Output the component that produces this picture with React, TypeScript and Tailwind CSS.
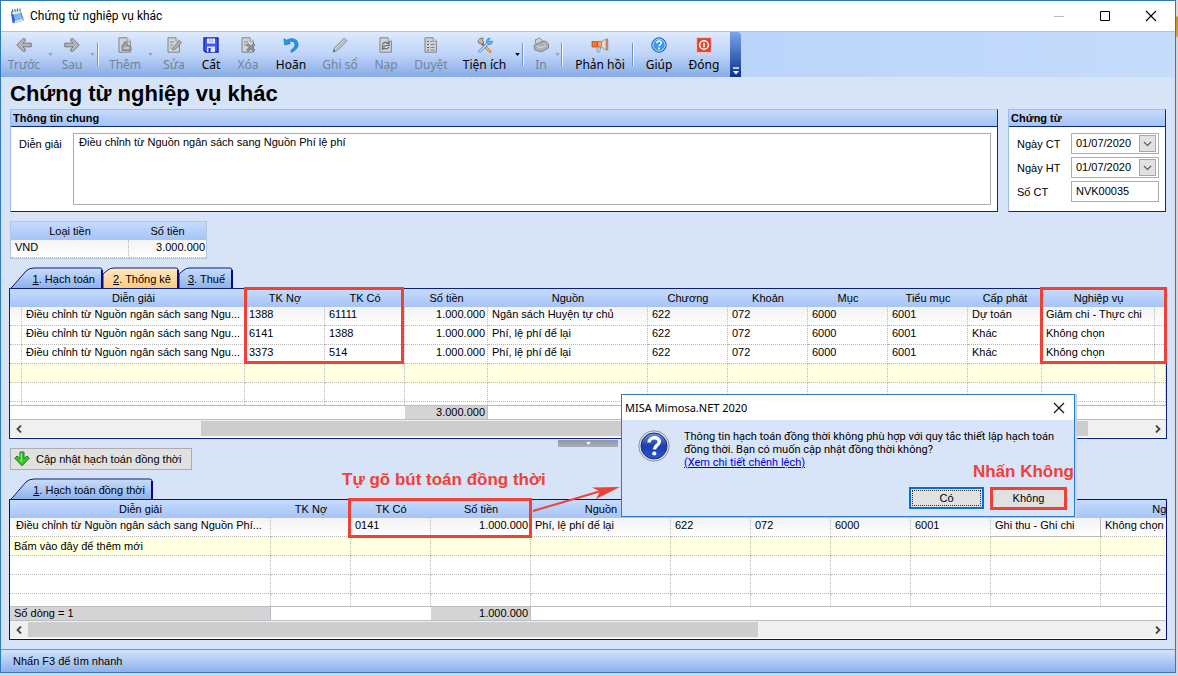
import React from "react";

type Tool = {
  label: string;
  box: string;
  icon: React.ReactNode;
  off?: boolean;
  menu?: string;
  sepAfter?: string;
};

const G = "#7f848b";

const BackIcon = ({ flip = false }: { flip?: boolean }) => (
  <svg viewBox="0 0 16 16" className={flip ? "size-4 -scale-x-100" : "size-4"}>
    <path d="M7.800 1 .8 8l7 7 2-2-2.900-3.200h8.300V6.200H6.900L9.800 3z" fill="#b4b6b8" stroke="#75797f" strokeWidth="1" strokeLinejoin="round" />
  </svg>
);
const Page = ({ children }: { children?: React.ReactNode }) => (
  <svg viewBox="0 0 16 16" className="size-4">
    <path d="M2 .8h8l3.400 3.400v11H2z" fill="#d0d4da" stroke={G} strokeWidth="1" />
    <path d="M10 .8v3.400h3.400" fill="#eceef1" stroke={G} strokeWidth=".8" />
    {children}
  </svg>
);
const AddIcon = () => (
  <Page>
    <path d="M5 13V8h2V5h3v3l4 1.500v4H5z" fill="#a0a3a8" stroke="#70757b" strokeWidth=".8" />
    <path d="M7 11h5" stroke="#dfe2e6" />
  </Page>
);
const EditIcon = () => (
  <Page>
    <path d="M4 5h4M4 8h3M4 11h2" stroke="#858a91" />
    <path d="m6.500 13 1-3L13.600 3.500l2 2-6 6.600z" fill="#aeb1b5" stroke="#70757b" strokeWidth=".8" />
  </Page>
);
const SaveIcon = () => (
  <svg viewBox="0 0 16 16" className="size-4">
    <path d="M1 1h14v14H2.500L1 13.500z" fill="#3d5bf0" stroke="#1a22c4" strokeWidth="1.400" />
    <path d="M4 1.500h8v5H4z" fill="#eef3ff" />
    <path d="M5.500 3h5M5.500 4.800h5" stroke="#7a93f2" strokeWidth=".8" />
    <path d="M4 9.500h8V15H4z" fill="#dbe5ff" />
    <path d="M5.500 11h2v4h-2z" fill="#1a22c4" />
  </svg>
);
const DeleteIcon = () => (
  <Page>
    <path d="M4 5h4M4 8h3" stroke="#858a91" />
    <path d="m7 7 7.500 7M14.500 7 7 14" stroke="#6a6f76" strokeWidth="2.400" />
    <path d="m7 7 7.500 7M14.500 7 7 14" stroke="#b9bcc0" strokeWidth=".9" />
  </Page>
);
const UndoIcon = () => (
  <svg viewBox="0 0 16 16" className="size-4">
    <path d="M1 1.800 1.600 8l6-1.500-2-1.700c3.600-1.300 6.400 0 6.300 3 0 2-1.200 3.700-3.800 5.400v2.200c4.500-1.900 7-4.700 7-8C15 2.500 9.500-.3 3.600 3.200z" fill="#2396e8" stroke="#1670bd" strokeWidth=".7" strokeLinejoin="round" />
  </svg>
);
const PencilIcon = () => (
  <svg viewBox="0 0 16 16" className="size-4">
    <path d="m1.200 15 1.300-4.200L12.300 1.200l2.700 2.600L5.300 13.500z" fill="#cfd1d5" stroke="#82878e" strokeWidth="1" strokeLinejoin="round" />
    <path d="m4 12.200 9.500-9.600" stroke="#9a9ea4" strokeWidth=".8" />
    <path d="m1.200 15 .8-2.500 1.700 1.700z" fill="#5c6168" />
  </svg>
);
const ReloadIcon = () => (
  <Page>
    <path d="M4.500 7.500c.6-2 3.500-2.700 5-1.200L11 5v3.500H7.600M11 9.800c-.6 2-3.500 2.700-5 1.200l-1.500 1.300V9h3.400" fill="none" stroke="#62676e" strokeWidth="1.200" />
  </Page>
);
const ListIcon = () => (
  <Page>
    <path d="M4 4.500h2M4 7.500h2M4 10.500h2M4 13h2" stroke="#5a5f66" strokeWidth="1.200" />
    <path d="M7.500 4.500h2M7.500 7.500h4M7.500 10.500h4M7.500 13h4" stroke="#7d8289" />
  </Page>
);
const ToolsIcon = () => (
  <svg viewBox="0 0 16 16" className="size-4">
    <path d="m4.500 6 8.700 8.700" stroke="#c46a1c" strokeWidth="2.600" strokeLinecap="round" />
    <path d="m8.500 10 4.700 4.700" stroke="#ffb968" strokeWidth="1.400" strokeLinecap="round" />
    <path d="M1 4.500C1.500 2 3.500.7 6.500 1.200L5 3l2 2-2.500 2.500L3 5.700 2 6.500z" fill="#b9bcc0" stroke="#73624f" strokeWidth=".8" />
    <path d="m2.800 14.200 8-8" stroke="#3b8fdd" strokeWidth="2.800" strokeLinecap="round" />
    <path d="m2.800 14.200 8-8" stroke="#c2e2fb" strokeWidth="1.300" strokeLinecap="round" />
    <path d="M9.500 4.500C9.600 2.300 11 1 13.200 1.200l-1.500 2 .9 1.500 2.700-.6c.3 2.200-1.200 3.600-3.600 3.500z" fill="#6cb6f3" stroke="#2e7bc7" strokeWidth=".8" />
  </svg>
);
const PrintIcon = () => (
  <svg viewBox="0 0 16 16" className="size-4">
    <path d="M2 3 6.500 1l3 2.500-1 4-5 1z" fill="#d0d3d7" stroke="#7f848b" strokeWidth=".9" />
    <path d="M1 8.500 5 6.500l4-2 3.500-.5L15.500 7v4L8.500 14.800 1.800 13z" fill="#aeb1b5" stroke="#787d84" strokeWidth=".9" strokeLinejoin="round" />
    <path d="m4 9.500 4.500 1.300L13 8" fill="none" stroke="#dcdfe3" />
  </svg>
);
const HornIcon = () => (
  <svg viewBox="0 0 18 16" className="h-4 w-[18px]">
    <path d="M1 4.500h5.500v5.500H1z" fill="#f0743a" stroke="#b9541a" strokeWidth=".8" />
    <path d="M6.500 4.500h4v5.500h-4z" fill="#ffa25c" stroke="#b9541a" strokeWidth=".8" />
    <path d="m10.500 4.500 4.800-2.500v11l-4.800-3z" fill="#d9dde3" stroke="#8b8f96" strokeWidth=".8" />
    <path d="M15.300 2h1.500v11h-1.500z" fill="#f2935a" stroke="#a3673f" strokeWidth=".6" />
    <path d="M5.500 10.200h4v2.300L8 15.300H6.500z" fill="#c4c8ce" stroke="#8b8f96" strokeWidth=".7" />
  </svg>
);
const HelpIcon = () => (
  <svg viewBox="0 0 16 16" className="size-4">
    <circle cx="8" cy="8" r="7.200" fill="#3b97ea" stroke="#1d5fb4" strokeWidth="1" />
    <circle cx="8" cy="8" r="6" fill="none" stroke="#bfe0fb" strokeWidth=".9" />
    <path d="M5.800 6.200c.1-3 4.700-2.800 4.500-.2-.1 1.500-2.200 1.600-2.200 3.300" fill="none" stroke="#fff" strokeWidth="1.500" />
    <path d="M7.200 10.600h1.700v1.600H7.200z" fill="#fff" />
  </svg>
);
const PowerIcon = () => (
  <svg viewBox="0 0 16 16" className="size-4">
    <rect x=".6" y=".6" width="14.800" height="14.800" rx="1" fill="#e2452c" stroke="#f7c9c0" strokeWidth="1" />
    <circle cx="8" cy="8" r="4.300" fill="none" stroke="#fff" strokeWidth="1.500" />
    <path d="M8 5.700v4.600" stroke="#fff" strokeWidth="1.500" />
  </svg>
);

const sep = "h-[23px] w-[2px] shrink-0 border-l border-[#6f93cc] bg-white/80";

const tools: Tool[] = [
  { label: "Trước", box: "w-[42px]", icon: <BackIcon />, off: true, menu: "w-[11px]" },
  { label: "Sau", box: "w-8", icon: <BackIcon flip />, off: true, menu: "w-[9px]", sepAfter: "mr-[5px]" },
  { label: "Thêm", box: "w-[42px]", icon: <AddIcon />, off: true, menu: "w-2" },
  { label: "Sửa", box: "w-10", icon: <EditIcon />, off: true },
  { label: "Cất", box: "w-[34px]", icon: <SaveIcon /> },
  { label: "Xóa", box: "w-10", icon: <DeleteIcon />, off: true },
  { label: "Hoãn", box: "w-[46px]", icon: <UndoIcon /> },
  { label: "Ghi sổ", box: "w-[52px]", icon: <PencilIcon />, off: true },
  { label: "Nạp", box: "w-10", icon: <ReloadIcon />, off: true },
  { label: "Duyệt", box: "w-[50px]", icon: <ListIcon />, off: true },
  { label: "Tiện ích", box: "w-[57px]", icon: <ToolsIcon />, menu: "w-[9px]", sepAfter: "mr-[5px]" },
  { label: "In", box: "w-6", icon: <PrintIcon />, off: true, menu: "w-2", sepAfter: "mr-[7px]" },
  { label: "Phản hồi", box: "w-[60px]", icon: <HornIcon />, sepAfter: "ml-[2px] mr-[6px]" },
  { label: "Giúp", box: "w-[38px]", icon: <HelpIcon /> },
  { label: "Đóng", box: "w-[52px]", icon: <PowerIcon /> },
];

function Toolbar() {
  return (
    <div role="toolbar" className="flex h-[46px] border-t border-[#a9c4ee] bg-linear-to-r from-[#a9c6f6] to-[#c5dcfb]">
      <div className="flex items-center bg-linear-to-b from-[#deeafc] via-[#bed4f8] to-[#87abe6] pl-[2px] font-['Noto_Sans',sans-serif]">
        {tools.map((t) => (
          <React.Fragment key={t.label}>
            <button type="button" disabled={t.off} className={`${t.box} flex shrink-0 flex-col items-center gap-1 whitespace-nowrap text-xs leading-4 ${t.off ? "text-[#75829a]" : "text-black"}`}>
              {t.icon}
              {t.label}
            </button>
            {t.menu && (
              <span className={`${t.menu} flex shrink-0 justify-center`}>
                <svg viewBox="0 0 6 4" className="h-[3px] w-[5px]">
                  <path d="M0 0h6L3 4z" fill={t.off ? "#8da4c9" : "#000"} />
                </svg>
              </span>
            )}
            {t.sepAfter && <span className={`${sep} ${t.sepAfter}`} />}
          </React.Fragment>
        ))}
      </div>
      <button type="button" aria-label="Tùy chọn" className="flex w-[11px] shrink-0 items-end justify-center rounded-tr-sm bg-linear-to-b from-[#7ba4ea] to-[#0f318e] pb-[2px]">
        <svg viewBox="0 0 8 8" className="size-2">
          <path d="M1 1h6" stroke="#fff" strokeWidth="1.400" />
          <path d="M1 4h6L4 7.500z" fill="#fff" />
        </svg>
      </button>
    </div>
  );
}

function Panel({ title, className, children }: { title: string; className: string; children: React.ReactNode }) {
  return (
    <section className={`${className} flex h-[103px] flex-col border-r border-b border-l border-t border-[#0b2a7a] border-t-[#9dbcec] border-l-[#9dbcec] bg-white`}>
      <h2 className="h-[17px] shrink-0 border-b border-[#0b2a7a] bg-linear-to-b from-[#c6dbfb] to-[#a5c2f5] pl-[2px] text-[11px] leading-4 font-bold">{title}</h2>
      {children}
    </section>
  );
}

function Chevron() {
  return (
    <svg viewBox="0 0 9 6" className="h-[6px] w-[9px]">
      <path d="m.8.800 3.700 3.700L8.200.8" fill="none" stroke="#555" strokeWidth="1.200" />
    </svg>
  );
}

function Field({ id, label, value, drop }: { id: string; label: string; value: string; drop?: boolean }) {
  return (
    <div className="flex items-center">
      <label htmlFor={id} className="w-[54px] shrink-0 pt-px">{label}</label>
      <div className="flex h-[21px] min-w-0 flex-1 items-center border border-[#abadb3] bg-white pr-[2px]">
        <input id={id} defaultValue={value} className="min-w-0 flex-1 bg-transparent pl-1 outline-none" />
        {drop && (
          <button type="button" aria-label={label} className="flex h-[17px] w-[17px] items-center justify-center border border-[#a9a9a9] bg-[#e1e1e1]">
            <Chevron />
          </button>
        )}
      </div>
    </div>
  );
}

function Tab({ n, label, box, first, on }: { n: string; label: string; box: string; first?: boolean; on?: boolean }) {
  const w = box === "w-[92px]" ? 92 : box === "w-[142px]" ? 142 : box === "w-[76px]" ? 76 : 54;
  const r = w - 1;
  const d = first ? `M0 21 2 19 15 4Q18 1 23 1H${r - 2}Q${r} 1 ${r} 3V21` : `M0 21V7L5 3Q7 1 11 1H${r - 2}Q${r} 1 ${r} 3V21`;
  const fill = on ? "url(#tab-warm)" : "url(#tab-cool)";
  return (
    <button type="button" role="tab" className={`${box} relative flex h-[21px] shrink-0 items-center justify-end pr-2 text-[11px] leading-none whitespace-nowrap`}>
      <svg viewBox={`0 0 ${w} 21`} className="absolute inset-0 size-full">
        <defs>
          <linearGradient id="tab-cool" x2="0" y2="1">
            <stop offset="0" stopColor="#c9ddfb" />
            <stop offset="1" stopColor="#8fb2ea" />
          </linearGradient>
          <linearGradient id="tab-warm" x2="0" y2="1">
            <stop offset="0" stopColor="#ffe9c6" />
            <stop offset="1" stopColor="#fccb80" />
          </linearGradient>
        </defs>
        <path d={d} fill={fill} stroke="#0a1c73" strokeWidth="1" />
        <path d={`M${r} 3V21`} stroke="#0a0a86" strokeWidth="2" />
      </svg>
      <span className="relative pt-[3px]">
        <u>{n}</u>. {label}
      </span>
    </button>
  );
}

function ScrollBar({ before, thumb }: { before: string; thumb: string }) {
  return (
    <div className="flex h-[17px] items-stretch bg-[#f0f0f0] py-px">
      <button type="button" aria-label="Cuộn trái" className="flex w-[17px] items-center justify-center">
        <svg viewBox="0 0 8 8" className="size-2"><path d="M6 .5 2.500 4 6 7.500" fill="none" stroke="#444" strokeWidth="1.800" /></svg>
      </button>
      <span className={`${before} shrink-0`} />
      <span className={`${thumb} shrink-0 bg-[#cdcdcd]`} />
      <span className="flex-1" />
      <button type="button" aria-label="Cuộn phải" className="flex w-[17px] items-center justify-center">
        <svg viewBox="0 0 8 8" className="size-2"><path d="M2 .5 5.500 4 2 7.500" fill="none" stroke="#444" strokeWidth="1.800" /></svg>
      </button>
    </div>
  );
}

const headRow = "h-[18px] bg-linear-to-b from-[#c6dbfc] to-[#a6c4f8]";
const cell = "h-[19px] whitespace-nowrap border-r border-b border-dotted border-[#b9b9b9] pl-1 align-top leading-[15px]";
const num = "h-[19px] whitespace-nowrap border-r border-b border-dotted border-[#b9b9b9] pr-[2px] text-right align-top leading-[15px]";
const foot = "h-[15px] border-y border-[#b9bdc6] leading-[13px]";
const mark = "pointer-events-none absolute border-3 border-[#ef4136]";

const cols1 = ["w-3", "w-[223px]", "w-20", "w-20", "w-[83px]", "w-40", "w-20", "w-20", "w-20", "w-20", "w-[74px]", "w-[113px]", ""];
const heads1 = ["", "Diễn giải", "TK Nợ", "TK Có", "Số tiền", "Nguồn", "Chương", "Khoản", "Mục", "Tiểu mục", "Cấp phát", "Nghiệp vụ", ""];
const desc = "Điều chỉnh từ Nguồn ngân sách sang Nguồn Phí lệ phí";
const descShort = "Điều chỉnh từ Nguồn ngân sách sang Ngu...";
const rows1 = [
  ["", descShort, "1388", "61111", "1.000.000", "Ngân sách Huyện tự chủ", "622", "072", "6000", "6001", "Dự toán", "Giảm chi - Thực chi", ""],
  ["", descShort, "6141", "1388", "1.000.000", "Phí, lệ phí để lại", "622", "072", "6000", "6001", "Khác", "Không chọn", ""],
  ["", descShort, "3373", "514", "1.000.000", "Phí, lệ phí để lại", "622", "072", "6000", "6001", "Khác", "Không chọn", ""],
];

const cols2 = ["w-[261px]", "w-20", "w-20", "w-[100px]", "w-[140px]", "w-20", "w-20", "w-20", "w-20", "w-[110px]", "w-[152px]"];
const heads2 = ["Diễn giải", "TK Nợ", "TK Có", "Số tiền", "Nguồn", "", "", "", "", "", "Nghiệp vụ"];
const row2 = ["Điều chỉnh từ Nguồn ngân sách sang Nguồn Phí...", "", "0141", "1.000.000", "Phí, lệ phí để lại", "622", "072", "6000", "6001", "Ghi thu - Ghi chi", "Không chọn"];

function EntryGrid() {
  return (
    <div className="relative border border-[#0b1f7c] bg-white pb-px">
      <table className="w-full table-fixed border-separate border-spacing-0">
        <colgroup>{cols1.map((c, i) => <col key={i} className={c} />)}</colgroup>
        <thead>
          <tr className={headRow}>{heads1.map((h, i) => <th key={i} className="font-normal leading-[18px]">{h}</th>)}</tr>
        </thead>
        <tbody>
          {rows1.map((r, i) => (
            <tr key={i} className={i === 0 ? "bg-linear-to-b from-[#f3f3f3] to-white" : ""}>
              {r.map((v, j) => <td key={j} className={j === 4 ? num : cell}>{v}</td>)}
            </tr>
          ))}
          <tr className="bg-[#ffffe1]">{cols1.map((_, j) => <td key={j} className={cell} />)}</tr>
          <tr>{cols1.map((_, j) => <td key={j} className={cell} />)}</tr>
          <tr>{cols1.map((_, j) => <td key={j} className="h-[3px] border-r border-dotted border-[#b9b9b9]" />)}</tr>
        </tbody>
        <tfoot>
          <tr>
            <td colSpan={4} className={foot} />
            <td className={`${foot} border-r bg-[#d4d4d4] pr-[2px] text-right`}>3.000.000</td>
            <td colSpan={8} className={foot} />
          </tr>
        </tfoot>
      </table>
      <ScrollBar before="w-[174px]" thumb="w-[887px]" />
      <div className={`${mark} top-[-2px] left-[234px] h-[77px] w-[160px]`} />
      <div className={`${mark} top-[-2px] left-[1030px] h-[77px] w-[127px]`} />
    </div>
  );
}

function ParallelGrid() {
  return (
    <div className="relative border border-[#0b0b7c] bg-white pb-px">
      <div className="overflow-hidden">
        <table className="w-[1243px] table-fixed border-separate border-spacing-0">
          <colgroup>{cols2.map((c, i) => <col key={i} className={c} />)}</colgroup>
          <thead>
            <tr className={headRow}>{heads2.map((h, i) => <th key={i} className="font-normal leading-[18px]">{h}</th>)}</tr>
          </thead>
          <tbody>
            <tr className="bg-linear-to-b from-[#f3f3f3] to-white">
              {row2.map((v, j) => <td key={j} className={j === 3 ? num : j === 9 ? `${cell} border-solid` : j === 0 ? `${cell} pl-[6px]` : cell}>{v}</td>)}
            </tr>
            <tr className="bg-[#ffffe1]">
              {cols2.map((_, j) => <td key={j} className={`${cell} leading-[18px]`}>{j === 0 ? "Bấm vào đây để thêm mới" : ""}</td>)}
            </tr>
            <tr>{cols2.map((_, j) => <td key={j} className={cell} />)}</tr>
            <tr>{cols2.map((_, j) => <td key={j} className={cell} />)}</tr>
            <tr>{cols2.map((_, j) => <td key={j} className="h-3 border-r border-dotted border-[#b9b9b9]" />)}</tr>
          </tbody>
          <tfoot>
            <tr>
              <td className={`${foot} border-r bg-[#d4d4d4] pl-1`}>Số dòng = 1</td>
              <td colSpan={2} className={foot} />
              <td className={`${foot} border-r bg-[#d4d4d4] pr-[2px] text-right`}>1.000.000</td>
              <td colSpan={7} className={foot} />
            </tr>
          </tfoot>
        </table>
      </div>
      <ScrollBar before="w-px" thumb="w-[730px]" />
      <div className={`${mark} top-[-2px] left-[338px] h-10 w-[184px]`} />
    </div>
  );
}

function Dialog() {
  return (
    <div role="dialog" aria-label="MISA Mimosa.NET 2020" className="absolute top-[393px] left-[620px] w-[454px] border border-[#2b7cc0] bg-[#d8e4f8] shadow-[2px_0_1px_#c9d3ee]">
      <div className="flex h-[25px] items-center justify-between bg-white pr-[9px] pl-[3px] font-['Noto_Sans',sans-serif] text-[11px]">
        <span>MISA Mimosa.NET 2020</span>
        <button type="button" aria-label="Đóng hộp thoại">
          <svg viewBox="0 0 12 12" className="size-3"><path d="m1 1 10 10M11 1 1 11" stroke="#111" strokeWidth="1.200" /></svg>
        </button>
      </div>
      <div className="flex h-[67px] gap-[14px] pt-[10px] pl-[16px]">
        <svg viewBox="0 0 32 32" className="size-8 shrink-0">
          <defs>
            <linearGradient id="ask" x2="0" y2="1">
              <stop offset="0" stopColor="#6d8fe6" />
              <stop offset=".5" stopColor="#1c3fae" />
              <stop offset="1" stopColor="#2b55d6" />
            </linearGradient>
          </defs>
          <circle cx="16" cy="16" r="15.200" fill="#dfe1e6" stroke="#8c919c" strokeWidth="1" />
          <circle cx="16" cy="16" r="13" fill="url(#ask)" stroke="#16307f" strokeWidth="1" />
          <path d="M11 12.500c.3-6.300 10.600-6.100 10.300-.5-.2 3.400-4.700 3.500-4.900 7.300" fill="none" stroke="#fff" strokeWidth="3.400" />
          <circle cx="16.300" cy="23.500" r="2.100" fill="#fff" />
        </svg>
        <div className="font-[Roboto,sans-serif] text-[11px] leading-[13px] whitespace-nowrap">
          <p>
            Thông tin hạch toán đồng thời không phù hợp với quy tắc thiết lập hạch toán
            <br />
            đồng thời. Bạn có muốn cập nhật đồng thời không?
          </p>
          <a href="#chi-tiet" className="text-[#0000ee] underline">(Xem chi tiết chênh lệch)</a>
        </div>
      </div>
      <div className="flex h-[29px] items-start justify-end gap-[6px] pr-[7px]">
        <button type="button" className="h-[22px] w-[75px] border-2 border-[#0a6fd0] bg-[#e1e1e1] p-px">
          <span className="flex h-full items-center justify-center border border-dotted border-[#333]">Có</span>
        </button>
        <button type="button" className="h-[23px] w-[77px] border-3 border-[#ef4136] bg-[#e1e1e1] leading-none">Không</button>
      </div>
      <span className="absolute top-[67px] right-0 text-[17px] leading-5 font-bold whitespace-nowrap text-[#ef4136]">Nhấn Không</span>
    </div>
  );
}

export default function App() {
  return (
    <div className="min-h-screen bg-[linear-gradient(#dcdcdc_16px,#c98f1c_17px,#d9a030_36px,#d6d6d6_38px)] pr-[2px] pb-[3px] font-['Liberation_Sans',Arial,sans-serif] text-[11px] leading-[13px] text-black">
      <div className="relative border border-[#2f7ab8] bg-[#d7e4f8]">
        <header className="flex h-[30px] items-center bg-white pr-[18px] pl-2 font-[Roboto,sans-serif] text-xs">
          <svg viewBox="0 0 16 16" className="mr-[5px] size-4">
            <path d="M2.500 3.500 11 2l3.500 10L5 15z" fill="#7fb4ee" stroke="#3d6cb8" strokeWidth=".8" />
            <path d="M2 5.500 3.500 15l3-.6L4.500 6z" fill="#3a63c9" />
            <path d="M3 3.500 10.800 2l1 3L3.800 6.400z" fill="#e5f0c8" />
            <path d="M3.500 1.200v3M6 .8v3M8.500.4v3M11 .4v2.500" stroke="#5a6473" strokeWidth=".9" />
            <path d="m5.500 14.200 8.500-2.700" stroke="#dcefff" strokeWidth="1.600" />
          </svg>
          <span className="flex-1">Chứng từ nghiệp vụ khác</span>
          <div className="flex items-center gap-[34px]">
            <button type="button" aria-label="Thu nhỏ"><svg viewBox="0 0 12 12" className="size-3"><path d="M1 6.500h10" stroke="#b3bccb" /></svg></button>
            <button type="button" aria-label="Phóng to"><svg viewBox="0 0 12 12" className="size-3"><path d="M1.500 1.500h9v9h-9z" fill="none" stroke="#000" /></svg></button>
            <button type="button" aria-label="Đóng cửa sổ"><svg viewBox="0 0 12 12" className="size-3"><path d="m1 1 10 10M11 1 1 11" stroke="#000" strokeWidth="1.100" /></svg></button>
          </div>
        </header>
        <Toolbar />
        <main className="px-2">
          <h1 className="h-8 pt-px pl-px text-[22px] leading-8 font-bold">Chứng từ nghiệp vụ khác</h1>
          <div className="flex gap-[10px] pr-px pl-px">
            <Panel title="Thông tin chung" className="min-w-0 flex-1">
              <div className="flex flex-1 items-start py-[6px] pr-[6px] pl-2">
                <label htmlFor="dien-giai" className="w-[54px] shrink-0 pt-[5px]">Diễn giải</label>
                <textarea id="dien-giai" defaultValue={desc} className="h-[72px] min-w-0 flex-1 resize-none border border-[#a9abb0] bg-white px-[5px] py-px leading-[15px] outline-none" />
              </div>
            </Panel>
            <Panel title="Chứng từ" className="w-[158px] shrink-0">
              <div className="flex flex-col gap-[3px] py-[6px] pr-[6px] pl-2">
                <Field id="ngay-ct" label="Ngày CT" value="01/07/2020" drop />
                <Field id="ngay-ht" label="Ngày HT" value="01/07/2020" drop />
                <Field id="so-ct" label="Số CT" value="NVK00035" />
              </div>
            </Panel>
          </div>

          <table className="mt-[9px] ml-px w-[197px] table-fixed border-separate border-spacing-0 border border-[#b6c6e2] bg-white">
            <thead>
              <tr className="h-[18px] bg-linear-to-b from-[#c6dbfc] to-[#a6c4f8]">
                <th className="w-[118px] font-normal leading-[18px]">Loại tiền</th>
                <th className="font-normal leading-[18px]">Số tiền</th>
              </tr>
            </thead>
            <tbody>
              <tr className="bg-linear-to-b from-[#f3f3f3] to-white">
                <td className="h-[18px] border-r border-b border-dotted border-[#b9b9b9] pl-1 align-top leading-[14px]">VND</td>
                <td className="h-[18px] border-b border-dotted border-[#b9b9b9] pr-px text-right align-top leading-[14px]">3.000.000</td>
              </tr>
            </tbody>
          </table>

          <div role="tablist" className="mt-2 flex h-[21px] pl-[2px]">
            <Tab n="1" label="Hạch toán" box="w-[92px]" first />
            <Tab n="2" label="Thống kê" box="w-[76px]" on />
            <Tab n="3" label="Thuế" box="w-[54px]" />
          </div>
          <EntryGrid />
          <div className="ml-[549px] flex h-[7px] w-[60px] translate-y-px items-center justify-center bg-linear-to-b from-[#8d97a8] to-[#a9afb9]">
            <svg viewBox="0 0 6 4" className="h-[3px] w-[5px]"><path d="M0 0h6L3 4z" fill="#fff" /></svg>
          </div>
          <button type="button" className="mt-[2px] ml-px flex h-[22px] w-[182px] items-center gap-[6px] border border-[#adadad] bg-[#e1e1e1] pl-[3px]">
            <svg viewBox="0 0 16 16" className="size-4">
              <path d="M6 1h4v6.500l3-2.500 2.200 2.300L8 14.800.8 7.300 3 5l3 2.500z" fill="#3cc32b" stroke="#1b7d14" strokeWidth="1" strokeLinejoin="round" />
              <path d="M7.300 2v9" stroke="#a8f09a" strokeWidth="1" />
            </svg>
            Cập nhật hạch toán đồng thời
          </button>
          <div role="tablist" className="mt-2 flex h-[21px] pl-[2px]">
            <Tab n="1" label="Hạch toán đồng thời" box="w-[142px]" first />
          </div>
          <ParallelGrid />
        </main>
        <footer className="mt-[9px] h-[23px] border-t border-[#6d91c8] bg-linear-to-b from-[#d3e3fb] to-[#8db1ea] pl-3 leading-[23px]">Nhấn F3 để tìm nhanh</footer>

        <Dialog />
        <span className="absolute top-[469px] left-[341px] text-[17px] leading-5 font-bold whitespace-nowrap text-[#ef4136]">Tự gõ bút toán đồng thời</span>
        <svg viewBox="0 0 90 32" className="absolute top-[482px] left-[530px] h-8 w-[90px]">
          <path d="M2 28 70 8" stroke="#ef4136" strokeWidth="2" />
          <path d="M89 4 61 4.500 69 8.500 65 16z" fill="#ef4136" />
        </svg>
      </div>
    </div>
  );
}
